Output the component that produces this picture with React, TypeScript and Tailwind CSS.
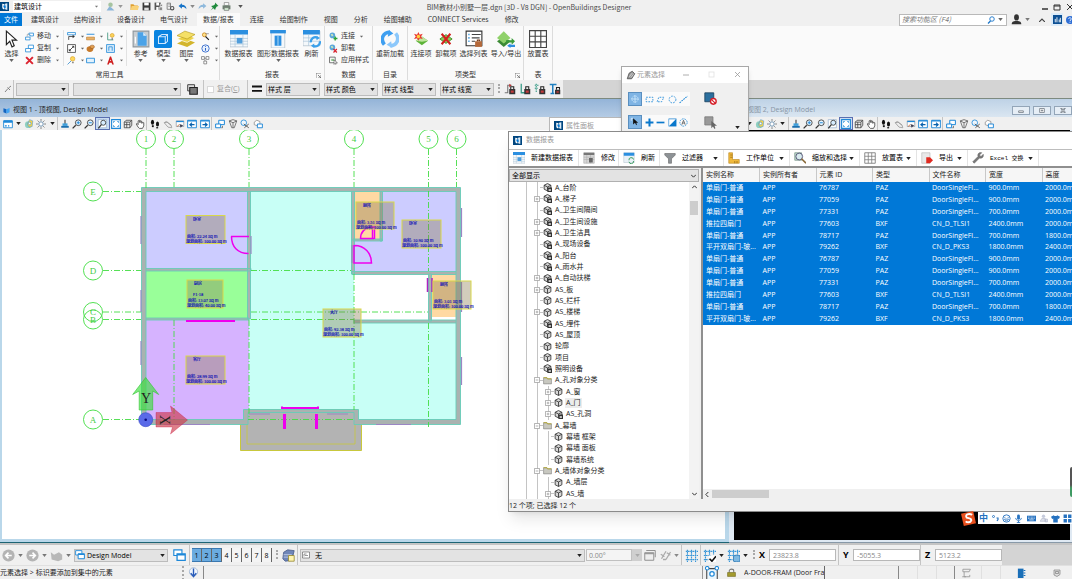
// @ts-nocheck
import { useState } from 'react';
import type { ReactNode } from 'react';

const BLUE = '#1e88d8';

// all glyphs share a 16 unit grid
const ICONS: Record<string, ReactNode> = {
  logo: <><rect width="16" height="16" fill="#00467f" /><path d="M4 3l4 1v9c-3 0-4-1-4-4z" fill="#fff" /><path d="M9 3l4-1v12l-4-1z" fill="#dcecf8" /><path d="M6 6h4v5c-2 0-4-1-4-3z" fill="#0078d7" /></>,
  person: <><circle cx="8" cy="5" r="4" fill="#a5c3a0" /><path d="M1 15l5-7 4 2 5 5z" fill="#8ab4d8" /></>,
  folder: <><path d="M1 4h5l2 2h6v8H1z" fill="#e0a030" /><path d="M3 7h13l-2 7H1z" fill="#f9d277" /></>,
  save: <><path d="M1 1h14v14H1z" fill="#3a3a3a" /><path d="M4 1h8v5H4z" fill="#fff" /><path d="M4 10h8v5H4z" fill="#ddd" /></>,
  saveset: <><path d="M1 1h11v13H1z" fill="#555" /><path d="M4 1h5v5H4zM4 9h4v5H4z" fill="#fff" /><path d="M11 4h4v4h-4zM9 9h6v6H9z" fill="#888" stroke="#fff" /></>,
  gear2: <><path d="M2 2h6v11H2z" fill="none" stroke="#777" strokeWidth="1.5" /><path d="M4 5h4M4 8h3" stroke="#777" /><circle cx="11" cy="11" r="3" fill="none" stroke="#555" strokeWidth="2" /></>,
  undo: <path d="M1 7l6-5v3c5 0 8 3 8 8-2-3-4-4-8-4v3z" fill="#1874c8" />,
  redo: <path d="M15 7L9 2v3C4 5 1 8 1 13c2-3 4-4 8-4v3z" fill="#8fb9dc" />,
  pin: <path d="M9 1l6 6-3 1-2 3-1 3-3-3-5 4 4-5-3-3 4-1 3-2z" fill="#1f8a3c" />,
  print: <><path d="M4 1h8v5H4z" fill="#fff" stroke="#666" /><path d="M1 6h14v7H1z" fill="#6d7f70" /><path d="M4 10h8v5H4z" fill="#cfe8cf" stroke="#666" /></>,
  cursor: <path d="M3 1v12l3-3 2 5 2-1-2-5h4z" fill="#fff" stroke="#222" strokeWidth="1" />,
  move: <><path d="M7 2h8v5H9V5H7z" fill="#fff" stroke={BLUE} strokeWidth="1.4" /><path d="M1 9h8v5H1z" fill="#fff" stroke={BLUE} strokeWidth="1.4" /><path d="M4 8V4h3" stroke="#888" fill="none" /></>,
  copy: <><path d="M6 2h9v6H6z" fill="#fff" stroke={BLUE} strokeWidth="1.4" /><path d="M1 8h9v6H1z" fill="#fff" stroke={BLUE} strokeWidth="1.4" /></>,
  del: <path d="M2 2l12 12M14 2L2 14" stroke="#dc2430" strokeWidth="3.5" />,
  lineset: <><path d="M1 1h14v4H1z" fill="#fff" stroke={BLUE} strokeWidth="1.4" /><path d="M3 14V8h8" fill="none" stroke="#333" strokeWidth="1.4" /><path d="M10 5l4 3-4 3z" fill="#333" /></>,
  measure: <><path d="M1 4h14" stroke={BLUE} strokeWidth="1.6" /><path d="M1 9h14v5H1z" fill="#e9b268" stroke="#b87a2c" /></>,
  axis: <><path d="M3 1v13h10" fill="none" stroke="#4a9b84" strokeWidth="1.6" /><circle cx="11" cy="6" r="3.5" fill="#fbd25a" stroke="#d69a1c" /><path d="M10 10h2v4h-2z" fill="#777" /></>,
  diag: <><path d="M1 1h14v14H1z" fill="#fff" stroke="#333" strokeWidth="1.3" /><path d="M4 12l8-8M9 4h3v3M4 9v3h3" stroke="#222" fill="none" strokeWidth="1.4" /></>,
  solid: <><ellipse cx="7" cy="9" rx="6" ry="5" fill="#c77a2a" /><ellipse cx="11" cy="5" rx="4" ry="3" fill="#e2a052" stroke="#97551a" /></>,
  profile: <><path d="M1 1h14v14H1z" fill="#d8ecfb" stroke={BLUE} strokeWidth="1.4" /><path d="M5 12V5h6v7" fill="none" stroke={BLUE} strokeWidth="1.4" /></>,
  bulb: <><path d="M1 15l7-7" stroke="#3e8fcc" strokeWidth="1.5" /><circle cx="10" cy="5" r="4" fill="#ffd85a" stroke="#d69a1c" /><path d="M9 10h3v3H9z" fill="#888" /></>,
  block: <path d="M1 4h14v8H1z" fill="#e3f2fc" stroke={BLUE} strokeWidth="1.5" />,
  letter: <path d="M7 1h2l5 14h-3l-1-3H6l-1 3H2zM7 9h2L8 6z" fill="#cf2020" fillRule="evenodd" />,
  refdoc: <><path d="M1 1h14v14H1z" fill="#c9ced2" stroke="#8f979d" /><path d="M5 2h5l3 3v9H5z" fill="#4ba3e8" /><path d="M10 2v3h3z" fill="#d8ecfb" /><path d="M3 6v6" stroke="#fff" /></>,
  model: <><rect width="16" height="16" rx="1.5" fill="#0a84e0" /><path d="M4 6h6v6H4zM4 6l3-2h5v6l-2 2M10 6l2-2" fill="none" stroke="#cfe8ff" strokeWidth="0.9" /></>,
  layers: <><path d="M0 12l9 3 7-4-8-3z" fill="#d3b52c" /><path d="M0 8l9 3 7-4-8-3z" fill="#ecd247" stroke="#fff" strokeWidth="0.6" /><path d="M0 5l9 3 7-4-9-3z" fill="#f5e067" stroke="#b99c1e" strokeWidth="0.6" /></>,
  find: <><circle cx="6" cy="5" r="3.5" fill="#ffe28a" stroke="#c9851c" strokeWidth="1.4" /><path d="M8 8l6 6" stroke="#222" strokeWidth="2" /><path d="M8 3h6" stroke="#666" /></>,
  info: <><circle cx="8" cy="8" r="6.5" fill="#e8f1fc" stroke="#2b63c9" strokeWidth="1.5" /><path d="M8 7v5M8 4v1.5" stroke="#2b63c9" strokeWidth="1.8" /></>,
  cells: <><path d="M1 1h5v5H1zM9 1h5v5H9zM5 9h5v5H5z" fill="#fff" stroke="#666" strokeWidth="1.2" /><path d="M6 4h3M7 6v3" stroke="#666" /></>,
  report: <><path d="M0 1h16v14H0z" fill="#f4f8fb" stroke="#a9b9c6" strokeWidth="0.6" /><path d="M0 0h16v4H0z" fill="#2b8fe0" /><path d="M0 7.500h16M0 10h16M0 12.500h16M4.500 4v11M11.500 4v11" stroke="#a9c4d8" strokeWidth="0.6" /><path d="M6 7h5v5H6z" fill="#4f9ddb" /></>,
  reportGrey: <><path d="M1 1h14v14H1z" fill="#d6d6d6" stroke="#999" strokeWidth="0.6" /><path d="M1 1h14v3H1z" fill="#777" /><path d="M1 7h14M1 10h14M5 4v11M10 4v11" stroke="#aaa" strokeWidth="0.7" /><path d="M8 8h5v6H8z" fill="#666" /></>,
  graphic: <><path d="M2 1h12v15H2z" fill="#f4f8fb" stroke="#a9b9c6" strokeWidth="0.6" /><path d="M1 0h14v3H1z" fill="#2b8fe0" /><path d="M5 5h6v9H5z" fill="#2b8fe0" /><path d="M8 5v9" stroke="#9fd0f5" /></>,
  refresh: <><path d="M0 1h15v13H0z" fill="#f4f8fb" stroke="#a9b9c6" strokeWidth="0.6" /><path d="M0 0h15v4H0z" fill="#2b8fe0" /><path d="M0 7h15M0 10h15M5 4v10" stroke="#a9c4d8" strokeWidth="0.6" /><path d="M7 11a4 4 0 0 1 6-4M15 10a4 4 0 0 1-6 4" fill="none" stroke="#3aa0ea" strokeWidth="2" /><path d="M12 5l3 2-3 2zM10 12l-3 2 3 2z" fill="#3aa0ea" /></>,
  refreshGreen: <><path d="M1 1h14v13H1z" fill="#e9f1f7" stroke="#a9b9c6" strokeWidth="0.6" /><path d="M1 1h14v4H1z" fill="#2b8fe0" /><path d="M8 11a3 3 0 0 1 6-1M14 12a3 3 0 0 1-6 1" fill="none" stroke="#3a9c62" strokeWidth="1.3" /></>,
  attach: <><circle cx="6" cy="6" r="5" fill="#5aa6dc" /><path d="M3 4l3-1 2 3-3 2zM7 8l3 1" fill="#c9e5b8" /><path d="M11 8v7M8 11.500h7" stroke="#2ba33b" strokeWidth="2.6" /></>,
  detach: <><circle cx="6" cy="6" r="5" fill="#5aa6dc" /><path d="M3 4l3-1 2 3-3 2z" fill="#c9e5b8" /><path d="M8 9l6 6M14 9l-6 6" stroke="#d8232e" strokeWidth="2.2" /></>,
  applystyle: <><path d="M1 2h10v10H1z" fill="#fff" stroke="#444" strokeWidth="1.3" /><path d="M4 5h5v4H4z" fill="#8cc28e" /><path d="M9 7v8l2-2 1 2 1-1-1-2h3z" fill="#fff" stroke="#222" strokeWidth="0.8" /></>,
  reload: <><path d="M3 13C-1 8 2 2 8 2" fill="none" stroke="#3f9ff0" strokeWidth="3.200" /><path d="M7 0l4 3-5 3z" fill="#3f9ff0" /><path d="M13 3c4 5 1 11-5 11" fill="none" stroke="#8cc8fb" strokeWidth="3.200" /><path d="M9 10l-4 3 5 3z" fill="#8cc8fb" /></>,
  linkitem: <><path d="M2 10l7-5 7 5-7 5z" fill="#5cb338" /><path d="M2 10l7-5 7 5-7 1z" fill="#bfe59d" /><path d="M5 0l1.500 3L10 2 8 5l2 3-3.500-1L5 10 3.500 7 0 8l2-3-2-3 3.500 1z" fill="#e9342d" /><circle cx="5" cy="5" r="2" fill="#ffd23f" /></>,
  unlinkitem: <><path d="M1 8l7-5 7 5-7 5z" fill="#8ccc5c" stroke="#3f8a28" /><path d="M3 2l10 12M13 2L3 14" stroke="#d3201f" strokeWidth="2.400" /></>,
  picklist: <><path d="M1 1h14v13H1z" fill="#fff" stroke="#333" strokeWidth="1" /><path d="M3 4h1M3 7h1M3 10h1" stroke={BLUE} strokeWidth="1.500" /><path d="M6 4h8M6 7h7M6 10h3" stroke="#444" strokeWidth="0.9" /><path d="M9 10h6v5H9z" fill="#b5693a" /><path d="M11 10V9h2v1" fill="none" stroke="#7a3f1c" /></>,
  impexp: <><path d="M0 10l6-4 6 4-6 5z" fill="#3c8a35" /><path d="M0 7l6-6 6 6-6 5z" fill="#8fd16a" /><path d="M8 9h5V7l3 3-3 3v-2H8z" fill="#3a9c3a" /><path d="M16 13h-4v-1l-3 2 3 2v-1h4z" fill="#2f8fe0" /></>,
  grid: <><path d="M0.500 0.500h15v15h-15z" fill="#fff" stroke="#444" strokeWidth="1" /><path d="M0 5.500h16M0 10.500h16M5.500 0v16M10.500 0v16" stroke="#444" strokeWidth="1" /></>,
  gridGrey: <><path d="M1 1h14v14H1z" fill="#fff" stroke="#777" strokeWidth="1.100" /><path d="M1 5.700h14M1 10.300h14M5.700 1v14M10.300 1v14" stroke="#777" /></>,
  picker: <path d="M2 14l6-7M7 5l5 5M9 6l5-4" stroke="#777" strokeWidth="1.800" fill="none" />,
  stack: <><path d="M1 1h10v9H1z" fill="#ddd" stroke="#333" strokeWidth="1.300" /><path d="M4 5h11v10H4z" fill="#777" stroke="#222" strokeWidth="1.600" /></>,
  weight: <path d="M0 4h16M0 11h16" stroke="#111" strokeWidth="3" />,
  lockA: <><path d="M1 13h4V3h5" fill="none" stroke="#777" strokeWidth="1.500" /><path d="M7 1l3 2-3 3z" fill="#c03030" /><path d="M9 8V5h4v3" fill="none" stroke="#222" strokeWidth="1.400" /><path d="M7 8h8v7H7z" fill="#333" /><path d="M9 10h4v3H9z" fill="#c23a3a" /></>,
  lockB: <><path d="M3 1v12h5" fill="none" stroke="#3a9c88" strokeWidth="1.700" /><path d="M9 8V5h4v3" fill="none" stroke="#222" strokeWidth="1.400" /><path d="M7 8h8v7H7z" fill="#333" /><path d="M9 10h4v3H9z" fill="#c23a3a" /></>,
  lockC: <><path d="M1 3h6M1 7h4M3 1v12" fill="none" stroke="#3a9c88" strokeWidth="1.500" strokeDasharray="2 1" /><path d="M9 8V5h4v3" fill="none" stroke="#222" strokeWidth="1.400" /><path d="M7 8h8v7H7z" fill="#333" /><path d="M9 10h4v3H9z" fill="#c23a3a" /></>,
  lockD: <><path d="M1 2h9M5 2v12M2 14h5" fill="none" stroke="#1e7fc0" strokeWidth="2" /><path d="M10 9V6h4v3" fill="none" stroke="#222" strokeWidth="1.400" /><path d="M8 9h7v6H8z" fill="#333" /><path d="M10 11h3v2h-3z" fill="#c23a3a" /></>,
  user: <><ellipse cx="8" cy="5" rx="3.500" ry="4.500" fill="#333" /><path d="M1 15c0-5 4-5 7-5s7 0 7 5z" fill="#333" /></>,
  chart: <><rect width="16" height="16" fill="#0b4f94" /><path d="M4 13V7M7 13V4M11 13V8M13 13V5" stroke="#fff" strokeWidth="1.600" /></>,
  help: <><circle cx="8" cy="8" r="8" fill="#2f6fd6" /><path d="M5.500 6c0-4 5-3 5 0 0 2-2.500 2-2.500 4M8 11.500v2" stroke="#fff" strokeWidth="1.700" fill="none" /></>,
  mag: <><circle cx="10" cy="6" r="4.500" fill="none" stroke="#1874c8" strokeWidth="1.800" /><path d="M7 10l-5 5" stroke="#1874c8" strokeWidth="2.400" /></>,
  viewattr: <><path d="M1 3h14v11H1z" fill="#fff" stroke={BLUE} strokeWidth="1.400" /><path d="M1 2h14v4H1z" fill={BLUE} /><path d="M3 11h3M8 11h2" stroke={BLUE} strokeWidth="2" /></>,
  display: <><circle cx="7" cy="9" r="5.500" fill="#8fd0c0" /><path d="M5 8L9 1l5 2-1 9-5 1z" fill="#f2d24a" stroke="#5f9fd0" /><circle cx="9" cy="7" r="2" fill="#fff" stroke="#3e8fcc" /></>,
  sun: <><circle cx="8" cy="8" r="3.500" fill="#fff" stroke="#6a8fae" strokeWidth="1.500" /><path d="M8 0v3M8 13v3M0 8h3M13 8h3M2.500 2.500l2 2M11.500 11.500l2 2M13.500 2.500l-2 2M4.500 11.500l-2 2" stroke="#777" strokeWidth="1.400" /></>,
  brush: <><path d="M7 1h2v7H7z" fill="#555" /><path d="M4 7h8v4H4z" fill="#3fa0dc" /><path d="M2 11h12v3H2z" fill="#1b6fae" /></>,
  zoomin: <><circle cx="10" cy="6" r="4.600" fill="#e5f4ff" stroke="#333" strokeWidth="1.300" /><path d="M10 3.500v5M7.500 6h5" stroke={BLUE} strokeWidth="1.500" /><path d="M6 10l-5 5" stroke="#333" strokeWidth="2" /></>,
  zoomout: <><circle cx="10" cy="6" r="4.600" fill="#e5f4ff" stroke="#333" strokeWidth="1.300" /><path d="M7.500 6h5" stroke={BLUE} strokeWidth="1.500" /><path d="M6 10l-5 5" stroke="#333" strokeWidth="2" /></>,
  zoomwin: <><path d="M2 1h13v13H2z" fill="#fff" stroke="#8aa8c8" /><circle cx="10" cy="6" r="4" fill="#d6ecff" stroke="#333" strokeWidth="1.300" /><path d="M7 9l-5 6" stroke="#333" strokeWidth="2" /></>,
  fit: <><path d="M1 1h14v14H1z" fill="#fff" stroke={BLUE} strokeWidth="1.800" /><path d="M4 6V4h2M10 4h2v2M4 10v2h2M12 10v2h-2" fill="none" stroke={BLUE} strokeWidth="1.300" /></>,
  cube: <><path d="M2 5l3-3h9v8l-3 4H2zM2 5h9v9M11 5l3-3M6 5v9M2 9h9" fill="none" stroke="#444" strokeWidth="1.300" /></>,
  hand: <path d="M5 13L2 8l1-1 2 2V3l2-1 1 4V3l2 0 1 4 1-2 2 1v5l-2 4H7z" fill="#fff" stroke="#444" strokeWidth="1.300" />,
  feet: <><ellipse cx="4" cy="5" rx="2.500" ry="4" fill="#111" /><path d="M3 10h3v3H3z" fill="#111" /><ellipse cx="12" cy="8" rx="2.500" ry="4" fill="#111" /><path d="M10 13h3v2h-3z" fill="#111" /></>,
  fly: <path d="M2 6l6 7 6 1-1-4-6-5zM2 6l3-2 8 6" fill="#eee" stroke="#999" strokeWidth="1.300" />,
  camera: <><path d="M2 3h12v9H2z" fill="#fff" stroke="#7b8794" /><path d="M2 3h12v2H2z" fill={BLUE} /><path d="M7 8l6 2-4 4z" fill="#445" /><path d="M4 12l2-3" stroke="#c63" strokeWidth="1.500" /></>,
  prev: <><path d="M1 2h14v12H1z" fill="#fff" stroke={BLUE} strokeWidth="1.500" /><path d="M1 2h14v2H1z" fill={BLUE} /><path d="M12 9H5M8 6L4.500 9 8 12" fill="none" stroke="#0a62ad" strokeWidth="1.700" /></>,
  next: <><path d="M1 2h14v12H1z" fill="#fff" stroke={BLUE} strokeWidth="1.500" /><path d="M1 2h14v2H1z" fill={BLUE} /><path d="M4 9h7M8 6l3.500 3L8 12" fill="none" stroke="#0a62ad" strokeWidth="1.700" /></>,
  copyview: <><path d="M6 2h9v7H6z" fill="#fff" stroke={BLUE} strokeWidth="1.600" /><path d="M1 8h8v6H1z" fill="#fff" stroke={BLUE} strokeWidth="1.600" /><path d="M12 11v3h-2" stroke="#444" fill="none" /></>,
  clipvol: <path d="M2 3l6-2 6 2-4 11H6zM2 3l6 3 6-3M8 6v8" fill="#eee" stroke="#555" strokeWidth="1.200" />,
  clipmask: <><circle cx="6" cy="6" r="4.500" fill="#eef6fd" stroke={BLUE} strokeWidth="1.300" /><path d="M6 8l8 6M14 8l-7 6" stroke="#555" strokeWidth="1.500" /></>,
  viewcopy: <><path d="M2 5l4-3 5 2v5l-4 2-5-2z" fill="#fff" stroke="#888" strokeWidth="1.200" /><path d="M7 8h8v6H7z" fill="#fff" stroke={BLUE} strokeWidth="1.500" /></>,
  pencil: <><path d="M2 14L5 5l5-3 4 4-5 8z" fill="#999" stroke="#444" strokeWidth="1.200" /><path d="M5 11l5-6M8 12l4-5" stroke="#eee" /></>,
  target: <><circle cx="8" cy="8" r="5" fill="none" stroke="#d8efff" strokeWidth="1.200" strokeDasharray="2 1" /><path d="M8 2v12M2 8h12" stroke="#d8efff" strokeWidth="1.200" /></>,
  dashbox: <path d="M2 4h12v8H2z" fill="none" stroke={BLUE} strokeWidth="1.500" strokeDasharray="3 2" />,
  dashpoly: <path d="M2 12l3-8h9l-4 8z" fill="none" stroke={BLUE} strokeWidth="1.500" strokeDasharray="3 2" />,
  dashcircle: <circle cx="8" cy="8" r="6" fill="none" stroke={BLUE} strokeWidth="1.500" strokeDasharray="3 2" />,
  dashline: <path d="M1 14L15 2" stroke={BLUE} strokeWidth="1.800" strokeDasharray="3 1.500" />,
  arrowsel: <><path d="M5 2v10l3-3 2 4 1-1-1-3h3z" fill="#111" /><path d="M2 2h3M2 2v4" stroke="#fff" /></>,
  plus: <path d="M8 1v14M1 8h14" stroke="#0a78cc" strokeWidth="3.600" />,
  minus: <path d="M1 8h14" stroke="#0a78cc" strokeWidth="3" />,
  invert: <><path d="M1 1h14v14H1z" fill="#0a78cc" /><path d="M2 2h12L2 14z" fill="#fff" /></>,
  selall: <><circle cx="8" cy="8" r="6.500" fill="none" stroke={BLUE} strokeWidth="1.400" strokeDasharray="3 1.500" /><path d="M5 12l3-8 3 8M6 9h4" stroke="#555" strokeWidth="1.400" fill="none" /></>,
  noselect: <><path d="M1 1h11v11H1z" fill="#2b6f9e" stroke="#173f5c" /><circle cx="11.500" cy="11.500" r="3.500" fill="#fff" stroke="#d6202a" strokeWidth="1.700" /><path d="M9 9l5 5" stroke="#d6202a" strokeWidth="1.500" /></>,
  greysel: <><path d="M1 1h10v10H1z" fill="#999" stroke="#777" /><path d="M9 6v9l2-2 2 3 1-1-1-3h3z" fill="#666" /></>,
  funnel: <path d="M1 2h14v2l-5 5v6H6V9L1 4z" fill="#8d9296" stroke="#666" strokeWidth="0.800" />,
  ruler: <><path d="M1 1h5v9h9v5H1z" fill="#f0b93c" stroke="#b8841c" strokeWidth="0.800" /><path d="M3 4h3M3 7h3M9 12v3M12 12v3" stroke="#8a5f10" strokeWidth="0.900" /></>,
  zoomsel: <><path d="M1 1h9v10H1z" fill="#bcd8cc" stroke="#7a948a" /><circle cx="7" cy="6" r="4.500" fill="#dff0f8" fillOpacity="0.800" stroke="#557" strokeWidth="1.200" /><path d="M10 9l6 6" stroke="#8a6a3a" strokeWidth="2.200" /></>,
  export: <><path d="M1 1h11v14H1z" fill="#e9e9e9" stroke="#aaa" strokeWidth="0.700" /><path d="M7 7h5l4 4-4 4H7z" fill="#e02a20" /></>,
  wrench: <path d="M15 3l-3 3-2-2 3-3c-4-1-6 2-5 5L1 13l2 2 7-7c3 1 6-1 5-5z" fill="#7a7a7a" stroke="#555" strokeWidth="0.600" />,
  part: <><path d="M8 1l6 3v8l-6 3-6-3V4z" fill="#d8d8d8" stroke="#333" strokeWidth="1.500" /><path d="M2 4l6 3 6-3M8 7v8" stroke="#333" strokeWidth="1.500" fill="none" /></>,
  partLock: <><path d="M8 1l6 3v6l-6 4-6-3V4z" fill="#d8d8d8" stroke="#333" strokeWidth="1.500" /><path d="M2 4l6 3 6-3M8 7v7" stroke="#333" strokeWidth="1.500" fill="none" /><path d="M8 8h8v8H8z" fill="#333" /><path d="M10 11h4v3h-4z" fill="#ddd" /></>,
  treeFolder: <><path d="M1 3h6l1 2h7v9H1z" fill="#c8c8c0" stroke="#777" strokeWidth="1" /><path d="M1 3h6l1 2h7" stroke="#b5a92c" strokeWidth="1.600" fill="none" /></>,
  back: <><circle cx="8" cy="8" r="7.500" fill="#b4b4b4" /><path d="M12 8H5M8 4.500L4.500 8 8 11.500" stroke="#fff" strokeWidth="2" fill="none" /></>,
  fwd: <><circle cx="8" cy="8" r="7.500" fill="#b4b4b4" /><path d="M4 8h7M8 4.500L11.500 8 8 11.500" stroke="#fff" strokeWidth="2" fill="none" /></>,
  teapot: <path d="M1 4l4 3 6-3 4 3v6l-5 2-8-2z" fill="#b8b8b8" />,
  windows: <><path d="M1 1h10v7H1z" fill="#fff" stroke={BLUE} strokeWidth="1.400" /><path d="M5 6h10v8H5z" fill="#fff" stroke={BLUE} strokeWidth="1.600" /><path d="M5 6h10v2H5z" fill={BLUE} /></>,
  levels: <><path d="M2 4l5-3 8 1-3 12-8 1-3-3z" fill="#6f86b8" stroke="#4a5c8a" /><path d="M2 7l10 0M2 10h9" stroke="#c9d5ee" /><path d="M8 8h7v7H8z" fill="#fff4b0" stroke="#998a30" /></>,
  acs: <><path d="M1 2h14v12H1z" fill="#fff" stroke="#555" strokeWidth="1.200" /><path d="M4 11V6h5M6 9h6" stroke="#555" strokeWidth="1.200" fill="none" /></>,
  calendar: <><path d="M1 5h12v10H1z" fill="#eee" stroke="#888" strokeWidth="1.200" /><path d="M3 2h12v9" fill="none" stroke="#888" strokeWidth="1.200" /><path d="M1 5h12v2H1z" fill="#999" /></>,
  rotateg: <path d="M2 13L8 3M8 14l6-10M1 7l5 3M9 5l5 3M4 14h4" stroke="#aaa" strokeWidth="1.700" fill="none" />,
  snapgrid: <path d="M1 3h15M1 8h15M1 13h15M3 1v15M8 1v15M13 1v15" stroke="#3a97d8" strokeWidth="1.400" fill="none" strokeDasharray="2 0.700" />,
  snapcheck: <><path d="M1 3h15M1 8h9M1 13h6M3 1v15M8 1v9M13 1v6" stroke="#3a97d8" strokeWidth="1.400" fill="none" strokeDasharray="2 0.700" /><path d="M7 8h9v8H7z" fill="#fff" /><path d="M8 12l3 3 5-6" stroke="#111" strokeWidth="2" fill="none" /></>,
  snapdb: <><path d="M1 3h15M1 8h15M1 13h6M3 1v15M8 1v9M13 1v6" stroke="#3a97d8" strokeWidth="1.400" fill="none" strokeDasharray="2 0.700" /><path d="M8 9c2-2 6-2 8 0v6c-2 1-6 1-8 0z" fill="#7fb9e2" stroke="#2a78b4" /></>,
  infodown: <><circle cx="8" cy="7" r="6" fill="#f0f6fd" stroke="#8fa9cc" /><path d="M8 2v10M4 9l4 5 4-5" stroke="#2659b8" strokeWidth="2" fill="none" /></>,
  keysnap: <><path d="M2 3h12v13H2z" fill="#eaf5fc" stroke="#444" strokeWidth="1.200" /><circle cx="2.500" cy="2.500" r="2" fill="#fff" stroke={BLUE} strokeWidth="1.200" /><circle cx="13.500" cy="2.500" r="2" fill="#fff" stroke={BLUE} strokeWidth="1.200" /><circle cx="8" cy="9" r="2.500" fill="#fff" stroke={BLUE} strokeWidth="1.400" /></>,
  padlock: <><path d="M4 8V5c0-4 8-4 8 0v3" fill="none" stroke="#777" strokeWidth="1.800" /><path d="M1 8h14v7H1z" fill="#a39a2e" stroke="#6b6418" /></>,
  scroll: <path d="M3 2h12l-2 4H3zM5 6v8h9v-3M2 14h6" fill="none" stroke="#999" strokeWidth="1.400" />,
  chip: <><path d="M3 1h9v15H3z" fill="#1a6fb8" /><path d="M12 4h3M12 8h3M12 12h3" stroke="#1a6fb8" strokeWidth="1.600" /></>,
  badge: <path d="M2 2h12v9l-6 4-6-3zM5 5h6v4H5z" fill="#ddd" stroke="#777" strokeWidth="1.300" />,
  smile: <><circle cx="8" cy="8" r="6.500" fill="none" stroke="#2672c0" strokeWidth="1.600" /><path d="M5 5v2M11 5v2M4.500 9c1 4 6 4 7 0z" stroke="#2672c0" strokeWidth="1.400" fill="none" /></>,
  mic: <><rect x="5.500" y="1" width="5" height="9" rx="2.500" fill="#2672c0" /><path d="M3 7c0 6 10 6 10 0M8 12v3M5 15h6" stroke="#2672c0" strokeWidth="1.500" fill="none" /></>,
  keyboard: <><path d="M0 3h16v10H0z" fill="#2672c0" /><path d="M2 5.500h12M2 8h12" stroke="#fff" strokeWidth="1.200" strokeDasharray="1.500 1" /><path d="M4 10.500h8" stroke="#fff" strokeWidth="1.200" /></>,
  figure: <><circle cx="8" cy="4" r="3" fill="#c5cbdc" /><path d="M5 8h6v5H2zM11 9h4v5h-4z" fill="#dde0ea" stroke="#a9aec5" /></>,
  shirt: <path d="M5 2l-5 3 2 4 2-1v7h8V8l2 1 2-4-5-3c-1 2-5 2-6 0z" fill="#2672c0" />,
  apps: <path d="M1 1h6v6H1zM9 1h6v6H9zM1 9h6v6H1zM9 9h6v6H9z" fill="#2672c0" />,
  sogou: <><path d="M0 3l13-3 3 13-13 3z" fill="#e8501e" /><path d="M12 4C8 2 4 4 6 7c2 1 5 0 5 3-1 3-5 2-6 1" stroke="#fff" strokeWidth="2" fill="none" /></>,
};

function Ico({ n, c = 'size-[10px]' }: { n: string; c?: string }) {
  return <svg viewBox="0 0 16 16" className={`${c} shrink-0`} aria-hidden="true">{ICONS[n]}</svg>;
}

function Caret({ c = 'text-[#222]' }: { c?: string }) {
  return <svg viewBox="0 0 6 4" className={`h-[3px] w-[5px] shrink-0 ${c}`} aria-hidden="true"><path d="M0 0h6L3 4z" fill="currentColor" /></svg>;
}

const Sep = ({ c = 'bg-[#c4c4c4]' }) => <span className={`w-px self-stretch shrink-0 ${c}`} />;
const Grip = () => <span className="h-[14px] w-0 shrink-0 border-l-2 border-dotted border-[#a8a8a8]" />;

function Combo({ label, value, w }) {
  return (
    <span className={`relative flex h-[13px] items-center ${w}`}>
      <select aria-label={label} className="size-full appearance-none border border-[#bcbcbc] bg-[#e3e3e3] px-px text-[7px] leading-[11px] outline-none">
        <option>{value}</option>
      </select>
      <span className="pointer-events-none absolute right-[3px]"><Caret /></span>
    </span>
  );
}

function QuickBar() {
  return (
    <header className="flex h-[13px] items-center bg-[#f0f0f0]">
      <Ico n="logo" c="size-[9px]" />
      <span className="relative ml-1 flex h-[11px] w-[88px] items-center">
        <select aria-label="工作流" className="size-full appearance-none bg-white px-px text-[7px] leading-[11px] outline-none"><option>建筑设计</option></select>
        <span className="pointer-events-none absolute right-[2px]"><Caret c="text-[#777] scale-75" /></span>
      </span>
      <div className="ml-[5px] flex items-center gap-[3px]">
        <Ico n="person" c="size-[9px]" /><Caret c="text-[#999]" />
        <span className="w-px" />
        {['folder', 'save', 'saveset', 'gear2', 'undo'].map(n => <button key={n} aria-label={n}><Ico n={n} c="size-[9px]" /></button>)}
        <Caret c="text-[#888]" />
        {['redo', 'pin', 'print'].map(n => <button key={n} aria-label={n}><Ico n={n} c="size-[9px]" /></button>)}
        <span className="ml-1"><Caret c="text-[#555]" /></span>
      </div>
      <h1 className="pointer-events-none absolute left-0 right-[14px] text-center font-['Noto_Sans_CJK_SC',sans-serif] text-[7px] leading-[12px] text-[#4a4a4a]">
        BIM教材小别墅一层.dgn [3D - V8 DGN] - OpenBuildings Designer
      </h1>
      <svg viewBox="0 0 30 8" className="ml-auto h-[8px] w-[30px]" fill="none" stroke="#333">
        <path d="M0 6h6" strokeWidth="1.500" /><path d="M12 2h6v5h-6zM12 3h6" /><path d="M25 1l6 6M31 1l-6 6" />
      </svg>
    </header>
  );
}

const TABS_LEFT = ['建筑设计', '结构设计', '设备设计', '电气设计'];
const TABS_RIGHT = ['连接', '绘图制作', '视图', '分析', '绘图辅助', 'CONNECT Services', '修改'];

function TabBar() {
  return (
    <nav className="flex h-[13px] items-center bg-[#f0f0f0] font-['Noto_Sans_CJK_SC',sans-serif] leading-[13px] text-[#333]">
      <button className="h-full w-[22px] bg-[#0078d7] text-white">文件</button>
      <div className="ml-[9px] flex gap-[15px]">
        {TABS_LEFT.map(t => <button key={t}>{t}</button>)}
      </div>
      <button className="ml-[9px] h-full bg-[#fafafa] px-[6px]">数据/报表</button>
      <div className="ml-[10px] flex gap-4">
        {TABS_RIGHT.map(t => <button key={t} className="whitespace-nowrap">{t}</button>)}
      </div>
      <div className="ml-auto flex h-full items-center">
        <span className="relative flex h-[12px] w-[108px] items-center border border-[#b9b9b9] bg-white">
          <input aria-label="搜索" placeholder="搜索功能区 (F4)" className="min-w-0 flex-1 px-[2px] italic outline-none placeholder:text-[#777]" />
          <Ico n="mag" c="size-[8px]" /><span className="mx-[3px]"><Caret c="text-[#666]" /></span>
        </span>
        <span className="ml-[4px]"><Ico n="user" c="size-[11px]" /></span>
        <span className="ml-[3px]"><Caret c="text-[#777]" /></span>
        <svg viewBox="0 0 6 4" className="ml-[9px] h-[4px] w-[6px]" fill="none" stroke="#444" strokeWidth="1.200"><path d="M0 4l3-3 3 3" /></svg>
        <span className="ml-[6px] flex h-full w-[12px] items-center justify-center bg-[#dcebf8]"><Ico n="chart" c="size-[9px]" /></span>
        <span className="ml-[3px] w-[6px] overflow-hidden"><Ico n="help" c="size-[8px]" /></span>
      </div>
    </nav>
  );
}

function Big({ icon, text, w, caret = false, c = 'size-[18px]' }) {
  return (
    <button className={`flex flex-col items-center whitespace-nowrap ${w}`}>
      <Ico n={icon} c={c} />
      <span className="mt-px leading-[9px]">{text}</span>
      {caret && <span className="mt-px"><Caret c="text-[#666]" /></span>}
    </button>
  );
}

function Small({ icon, text, caret = true }) {
  return (
    <button className="flex h-[12px] items-center whitespace-nowrap leading-[12px]" aria-label={text || icon}>
      <Ico n={icon} c="size-[9px]" />
      {text && <span className="ml-[3px]">{text}</span>}
      {caret && <span className="ml-[4px] scale-75"><Caret c="text-[#666]" /></span>}
    </button>
  );
}

function Group({ title, w, children, launcher = false }) {
  return (
    <section className={`relative flex shrink-0 flex-col border-r border-[#dcdcdc] ${w}`}>
      <div className="flex flex-1 items-start pt-[4px]">{children}</div>
      <h2 className="text-center leading-[10px]">{title}</h2>
      {launcher && (
        <svg viewBox="0 0 5 5" className="absolute bottom-[2px] right-[3px] size-[5px]" fill="none" stroke="#666"><path d="M0 5V0h5M2 2l3 3M5 2v3H2" strokeWidth="0.800" /></svg>
      )}
    </section>
  );
}

function Ribbon() {
  return (
    <div className="flex h-[54px] bg-[#fafafa] text-[#333]">
      <Group title="常用工具" w="w-[220px]">
        <Big icon="cursor" text="选择" w="w-[24px]" caret />
        <div className="ml-[2px] flex flex-col">
          <Small icon="move" text="移动" /><Small icon="copy" text="复制" /><Small icon="del" text="删除" />
        </div>
        <span className="mx-[3px] h-[36px] w-px bg-[#e2e2e2]" />
        <div className="grid grid-cols-3 gap-x-[2px]">
          {['lineset', 'measure', 'axis', 'diag', 'solid', 'profile', 'bulb', 'block', 'letter'].map(n => <Small key={n} icon={n} text="" />)}
        </div>
        <span className="mx-[3px] h-[36px] w-px bg-[#e2e2e2]" />
        <Big icon="refdoc" text="参考" w="w-[23px]" caret />
        <Big icon="model" text="模型" w="w-[24px]" caret />
        <Big icon="layers" text="图层" w="w-[24px]" caret />
        <div className="ml-[3px] flex flex-col">
          {['find', 'info', 'cells'].map(n => <Small key={n} icon={n} text="" />)}
        </div>
      </Group>
      <Group title="报表" w="w-[105px]" launcher>
        <Big icon="report" text="数据报表" w="w-[37px]" caret />
        <Big icon="graphic" text="图形数据报表" w="w-[42px]" caret />
        <Big icon="refresh" text="刷新" w="w-[25px]" />
      </Group>
      <Group title="数据" w="w-[48px]">
        <div className="ml-[4px] flex flex-col">
          <Small icon="attach" text="连接" /><Small icon="detach" text="卸载" caret={false} /><Small icon="applystyle" text="应用样式" caret={false} />
        </div>
      </Group>
      <Group title="目录" w="w-[35px]"><Big icon="reload" text="重新加载" w="w-[34px]" /></Group>
      <Group title="项类型" w="w-[116px]" launcher>
        <Big icon="linkitem" text="连接项" w="w-[26px]" c="size-[14px] my-[2px]" />
        <Big icon="unlinkitem" text="卸载项" w="w-[24px]" c="size-[14px] my-[2px]" />
        <Big icon="picklist" text="选择列表" w="w-[31px]" />
        <Big icon="impexp" text="导入/导出" w="w-[34px]" />
      </Group>
      <Group title="表" w="w-[29px]"><Big icon="grid" text="放置表" w="w-[28px]" /></Group>
    </div>
  );
}

function AttributeBar() {
  return (
    <div className="flex h-[19px] border-b border-[#7d8a80] bg-[#d4d4d4]">
      <div className="flex items-center bg-[#f0f0f0] px-[2px]">
        <span className="w-[11px] pl-[2px]"><Ico n="picker" c="size-[8px]" /></span>
        <Sep /><span className="w-[2px]" />
        <Combo label="图层" value="" w="w-[53px]" />
        <span className="w-[4px]" />
        <Combo label="模板" value="" w="w-[108px]" />
        <span className="ml-[6px] mr-[5px]"><Ico n="stack" c="size-[11px]" /></span>
        <Sep />
        <label className="flex items-center text-[#999]"><input type="checkbox" className="mx-[3px] size-[7px] appearance-none border border-[#d8d8d8] bg-white" /><span className="w-[30px]">复合(<u>C</u>)</span></label>
        <Sep />
        <span className="mx-[4px]"><Ico n="weight" c="size-[10px]" /></span>
        <div className="flex gap-[4px]">
          {['层', '颜色', '线型', '线宽'].map(s => <Combo key={s} label={s} value={`样式 ${s}`} w="w-[54px]" />)}
        </div>
        <span className="mx-[4px]"><Grip /></span>
        <div className="flex gap-[3px]">
          {['lockA', 'lockB', 'lockC', 'lockD'].map(n => <button key={n} aria-label={n}><Ico n={n} c="size-[12px]" /></button>)}
        </div>
      </div>
    </div>
  );
}

function ViewTools({ active }) {
  const cell = (n: string) => (
    <button key={n} aria-label={n} className={`flex h-full flex-1 items-center justify-center ${n === active ? 'border border-[#5a6fb0] bg-[#c9dcf2]' : ''}`}>
      <Ico n={n} c="size-[10px]" />
    </button>
  );
  return (
    <div className="flex h-[13px] items-center bg-[#f0f0f0]">
      <span className="flex w-[12px]">{cell('viewattr')}</span>
      <span className="flex w-[9px] justify-center"><Caret /></span>
      <span className="flex w-[24px]">{cell('display')}{cell('sun')}</span>
      <span className="flex w-[10px] justify-center"><Caret /></span>
      <Sep />
      <span className="ml-px flex h-full w-[87px] items-center">{['brush', 'zoomin', 'zoomout', 'zoomwin', 'fit', 'cube', 'hand'].map(cell)}</span>
      <Sep />
      <span className="ml-[2px] flex w-[62px]">{['feet', 'fly', 'camera', 'prev', 'next'].map(cell)}</span>
      <Sep />
      <span className="ml-[2px] flex w-[50px]">{['copyview', 'clipvol', 'clipmask', 'viewcopy'].map(cell)}</span>
    </div>
  );
}

const AXES_X = [[146, '1'], [174, '2'], [249, '3'], [354, '4'], [428.5, '5'], [456.5, '6']];
const AXES_Y = [[191.5, 'E'], [270.5, 'D'], [312, 'C'], [319.5, 'B'], [419.5, 'A']];
const ROOMS = [
  { x: 186, y: 215.5, w: 39, h: 28, name: '卧室', area: '22.24', total: '100.00' },
  { x: 187, y: 280, w: 36, h: 28, name: '厨房', area: '13.07', total: '40.00', sub: 'F1-1a' },
  { x: 356, y: 202, w: 38, h: 27, name: '厕所', area: '3.51', total: '100.00' },
  { x: 402, y: 220, w: 39, h: 28, name: '卧室', area: '10.90', total: '100.00' },
  { x: 323, y: 309, w: 38, h: 28, name: '大厅', area: '92.38', total: '100.00' },
  { x: 433, y: 281, w: 38, h: 28, name: '厕所', area: '3.01', total: '100.00' },
  { x: 186, y: 356, w: 39, h: 28, name: '客厅', area: '28.99', total: '100.00' },
];

function FloorPlan() {
  const wall = { fill: '#aab2b0', stroke: '#66ccb8', strokeWidth: 0.9 };
  return (
    <svg viewBox="2 130 500 409" className="h-[409px] w-[500px] shrink-0">
      <path d="M146 191h104v79H146z" fill="#ccccff" />
      <path d="M146 271h102v48H146z" fill="#99ff99" />
      <path d="M146 320h103v100H146z" fill="#d6b3ff" />
      <path d="M249 191h105v131h103v98H249z" fill="#c8fff6" />
      <path d="M354 191h103v81H354z" fill="#ccccff" />
      <path d="M354 191h27v48h-27zM432 274h25v43h-25z" fill="#ffd9a3" />
      <path d="M240.500 424h5v-14h112v14h4v26.500h-121z" fill="#b3b3b3" stroke="#c8c83c" />
      <path d="M247 413v31h108v-31" fill="none" stroke="#c8c83c" strokeWidth="0.800" />

      <g {...wall}>
        <path d="M145 268.500h106v2.500H145zM145 318h104v2H145zM247.500 191h3v128h-3z" />
        <path d="M351.500 191h3v83h-3zM380 191h2.500v50H380zM353 239h29v2h-29zM352 271.500h106v3H352z" />
        <path d="M428.500 274h3v47h-3zM354 320h104v3H354z" />
        <path fillRule="evenodd" d="M141.500 187.500h319V424.500H354v-12H248v12H141.500zM146 191.500V419.500H243.500V409.500H358.500V419.500H456V191.500z" />
      </g>

      <g stroke="#43dd43" strokeWidth="0.900" fill="none" strokeDasharray="6 2 1 2">
        <path d="M146 149v39M174 149v38M249 149v38M354 149v38M428.500 149v38M456.500 149v38" />
        <path d="M174 320v100M249 320v100M354 274v136M428.500 191v80M428.500 323v104" />
        <path d="M103 191.500h38M103 270.500h38M251 270.500h100M103 312h38M251 312h177M103 319.500h38M251 319.500h103M103 419.500h38M248 419.500h106" />
      </g>
      <g stroke="#3fdc3f" strokeWidth="0.900" fill="none">
        {AXES_X.map(([x]) => <circle key={x} cx={x} cy={139} r={9.5} />)}
        {AXES_Y.map(([y]) => <circle key={y} cx={93} cy={y} r={9.5} />)}
      </g>
      <g className="font-['Liberation_Serif',serif]" fontSize="9" fill="#45cc45" textAnchor="middle">
        {AXES_X.map(([x, t]) => <text key={t} x={x} y={142}>{t}</text>)}
        {AXES_Y.map(([y, t]) => <text key={t} x={93} y={Number(y) + 3}>{t}</text>)}
      </g>

      <g stroke="#9b86c4" strokeWidth="1.200">
        <path d="M141 216v28M141 290v22M141 341v24M461.500 208v29M461.500 282v30M461.500 357v28M164 424.500h46M376 424.500h35M249 414h21M327 414h21M352 245v18M251 236v18" />
      </g>
      <g stroke="#ee00ee" strokeWidth="1.500" fill="none">
        <path d="M231 236.500h18M231.500 236.500c0 10 6 17 17 17" />
        <path d="M354 245v18h17.500c0-10-7-17.500-17-17.500" />
        <path d="M360.500 239c0-7 4-11 11-12h3v12M360 238.500h14M372.500 227v12" />
        <path d="M186 321h49M281 408h38M282 406.500v2M318 406.500v2" strokeWidth="2" />
        <path d="M284.500 414v15M316.500 414v15" strokeWidth="3" />
      </g>
      <path d="M427.500 278v14M432 278v14" stroke="#b020c0" strokeWidth="1.500" />

      {ROOMS.map(r => (
        <g key={`${r.x}-${r.y}`}>
          <rect x={r.x} y={r.y} width={r.w} height={r.h} fill="#8a7a50" fillOpacity="0.38" stroke="#d8d84a" strokeWidth="1" />
          <g className="font-['Noto_Sans_CJK_SC',sans-serif]" fontSize="4" fill="#1414b4" stroke="#1414b4" strokeWidth="0.15">
            <text x={r.x + 7} y={r.y + 5}>{r.name}</text>
            {r.sub && <text x={r.x + 6} y={r.y + 16}>{r.sub}</text>}
            <text x={r.x + 1} y={r.y + 22}>面积: {r.area} Sq m</text>
            <text x={r.x} y={r.y + 27}>规划面积: {r.total} Sq m</text>
          </g>
        </g>
      ))}

      <path d="M145.700 377.500l13 17-6-3.500v19h-13.500v-19l-6.500 3.500z" fill="#3ae03a" fillOpacity="0.65" stroke="#2fc52f" strokeWidth="0.600" />
      <path d="M156 412.500h16l-1.500-6.500 17 14-17 14 2-7H156z" fill="#cc3b4b" fillOpacity="0.65" stroke="#c03" strokeOpacity="0.500" strokeWidth="0.600" />
      <circle cx="145.700" cy="419.700" r="7" fill="#5a6ae8" stroke="#3646c8" strokeWidth="0.600" />
      <circle cx="145.700" cy="419.700" r="1.300" fill="#0a0a80" />
      <g className="font-['Liberation_Serif',serif]" fill="#222" textAnchor="middle">
        <text x="146" y="403" fontSize="14">Y</text>
        <text transform="translate(163.500 420) rotate(90)" y="4" fontSize="14">X</text>
      </g>
    </svg>
  );
}

function Workspace() {
  return (
    <main className="flex min-h-0 flex-1 border-b-2 border-[#c4c4c4]">
      <section className="flex w-[68%] flex-col border-b border-[#1c6474] bg-[#b9d7ea]">
        <div className="flex h-[18px] items-center bg-linear-to-b from-[#94b4d8] to-[#b4cbe4] pl-[3px] pt-[4px] text-[#222]">
          <span className="mr-[3px]"><svg viewBox="0 0 16 16" className="size-[7px]"><path d="M1 3l7 2v10l-7-3z" fill="#1565c0" /><path d="M8 5l7-3v10l-7 3z" fill="#42a5f5" /></svg></span>
          视图 1 - 顶视图, Design Model
        </div>
        <div className="bg-[#f0f0f0] pl-[2px]"><ViewTools active="zoomwin" /></div>
        <div className="mb-[3px] ml-[2px] mr-[4px] min-h-0 flex-1 overflow-hidden bg-white"><FloorPlan /></div>
      </section>
      <section className="flex min-w-0 flex-1 flex-col border-b border-[#8899a8] bg-[#dfe9f3]">
        <div className="flex h-[18px] items-center bg-linear-to-b from-[#bed2e6] to-[#dae6f1] pl-[18px] pt-[4px] text-[#8795a5]">
          视图 2, Design Model
          <div className="ml-auto flex gap-[3px]">
            {['M6 5h6v2H6z', 'M6 2h6v5H6zM8 4h2v1H8z', 'M6 2l2 2-2 3h2l1-2 1 2h2l-2-3 2-2h-2L9 4 8 2z'].map(d => (
              <button key={d} aria-label="窗口" className="h-[9px] w-[18px] border border-[#93a5b8] bg-[#e6eef6]">
                <svg viewBox="0 0 18 9" className="h-[7px] w-[16px]"><path d={d} fill="#fff" stroke="#5b6670" strokeWidth="0.900" /></svg>
              </button>
            ))}
          </div>
        </div>
        <div className="bg-[#f0f0f0] pl-[4px]"><ViewTools active="fit" /></div>
        <div className="mb-[2px] ml-[5px] mr-[2px] flex-1 bg-black" />
      </section>
    </main>
  );
}

function SelectionWindow() {
  return (
    <aside className="absolute left-[621px] top-[66px] h-[70px] w-[128px] border border-[#a8a8a8] bg-[#f0f0f0] shadow-md">
      <div className="flex h-[16px] items-center bg-white pl-[4px] text-[#999]">
        <Ico n="pencil" c="size-[10px]" /><span className="ml-px">元素选择</span>
        <svg viewBox="0 0 60 8" className="ml-auto mr-[7px] h-[8px] w-[60px]" fill="none" stroke="#999" strokeWidth="0.800">
          <path d="M2 4h6M54 1l5 5M59 1l-5 5" /><rect x="28" y="1" width="5" height="5" stroke="#e0e0e0" />
        </svg>
      </div>
      <div className="flex px-[6px] pt-[9px]">
        <div className="flex flex-col gap-[9px]">
          {[['target', 'dashbox', 'dashpoly', 'dashcircle', 'dashline'], ['arrowsel', 'plus', 'minus', 'invert', 'selall']].map(row => (
            <div key={row[0]} className="flex h-[14px] w-[62px] items-center justify-between bg-[#fafafa] pr-[2px]">
              {row.map((n, i) => (
                <button key={n} aria-label={n} className={i === 0 ? 'border border-[#5a8fc0] bg-[#7fb4e4] p-px' : ''}><Ico n={n} c={i === 0 ? 'size-[10px]' : 'size-[9px]'} /></button>
              ))}
            </div>
          ))}
        </div>
        <div className="ml-[14px] flex flex-col gap-[11px]">
          <Ico n="noselect" c="size-[13px]" /><Ico n="greysel" c="size-[13px]" />
        </div>
        <span className="ml-auto mr-[2px] self-end"><Caret /></span>
      </div>
    </aside>
  );
}

const TREE = [
  [1, '', 'partLock', 'A_台阶'], [1, '+', 'partLock', 'A_梯子'], [1, '', 'partLock', 'A_卫生间隔间'], [1, '+', 'partLock', 'A_卫生间设施'],
  [1, '+', 'partLock', 'A_卫生洁具'], [1, '', 'partLock', 'A_现场设备'], [1, '', 'partLock', 'A_阳台'], [1, '', 'partLock', 'A_雨水井'],
  [1, '+', 'partLock', 'A_自动扶梯'], [1, '+', 'part', 'AS_板'], [1, '', 'part', 'AS_栏杆'], [1, '+', 'part', 'AS_楼梯'],
  [1, '', 'partLock', 'AS_埋件'], [1, '', 'part', 'AS_屋顶'], [1, '', 'part', '轮廓'], [1, '', 'part', '项目'], [1, '', 'partLock', '照明设备'],
  [1, '-', 'treeFolder', 'A_孔对象分类'], [2, '+', 'part', 'A_窗'], [2, '+', 'part', 'A_门'], [2, '+', 'partLock', 'AS_孔洞'],
  [1, '-', 'treeFolder', 'A_幕墙'], [2, '', 'part', '幕墙 框架'], [2, '', 'part', '幕墙 面板'], [2, '', 'part', '幕墙系统'],
  [1, '-', 'treeFolder', 'A_墙体对象分类'], [2, '', 'part', 'A_墙层'], [2, '+', 'part', 'AS_墙'],
];

function TreeRow({ row }) {
  const [level, mark, icon, text] = row;
  return (
    <li className={`relative flex min-h-0 flex-1 items-center ${level === 2 ? 'ml-[10px] border-l border-[#c4c4c4]' : ''}`}>
      {mark && (
        <svg viewBox="0 0 7 7" className="absolute -left-[4px] size-[6px]" fill="#fff" stroke="#999" strokeWidth="0.900">
          <path d="M0.500 0.500h6v6h-6z" /><path d={mark === '+' ? 'M2 3.500h3M3.500 2v3' : 'M2 3.500h3'} />
        </svg>
      )}
      <span className="ml-[2px] h-px w-[3px] bg-[#c4c4c4]" />
      <Ico n={icon} c="size-[9px]" />
      <span className={`ml-[2px] whitespace-nowrap px-px leading-[10px] ${text === 'A_门' ? 'bg-[#ececec]' : ''}`}>{text}</span>
    </li>
  );
}

const DOORS = [
  ['单扇门-普通', 'APP', '76787', 'PAZ', 'DoorSingleFl...', '900.0mm', '2000.0mm'],
  ['单扇门-普通', 'APP', '77059', 'PAZ', 'DoorSingleFl...', '900.0mm', '2000.0mm'],
  ['单扇门-普通', 'APP', '77331', 'PAZ', 'DoorSingleFl...', '700.0mm', '2000.0mm'],
  ['推拉四扇门', 'APP', '77603', 'BXF', 'CN_D_TLSI1', '2400.0mm', '2000.0mm'],
  ['单扇门-普通', 'APP', '78717', 'PAZ', 'DoorSingleFl...', '700.0mm', '1800.0mm'],
  ['平开双扇门-玻...', 'APP', '79262', 'BXF', 'CN_D_PKS3', '1800.0mm', '2400.0mm'],
];
const COLS = ['实例名称', '实例所有者', '元素 ID', '类型', '文件名称', '宽度', '高度'];

const REPORT_TOOLS = [
  { icon: 'report', text: '新建数据报表', w: 'w-[70px]' },
  { icon: 'reportGrey', text: '修改', w: 'w-[40px]' },
  { icon: 'refreshGreen', text: '刷新', w: 'w-[41px]' },
  { icon: 'funnel', text: '过滤器', w: 'w-[64px]', caret: true },
  { icon: 'ruler', text: '工作单位', w: 'w-[66px]', caret: true },
  { icon: 'zoomsel', text: '缩放和选择', w: 'w-[70px]', caret: true },
  { icon: 'gridGrey', text: '放置表', w: 'w-[57px]', caret: true },
  { icon: 'export', text: '导出', w: 'w-[51px]', caret: true },
  { icon: 'wrench', text: 'Excel 交换', w: 'w-[71px]', caret: true, mono: true },
];

function Chevron({ d }) {
  return <svg viewBox="0 0 6 6" className="size-[5px] shrink-0" fill="none" stroke="#333" strokeWidth="1.200"><path d={d} /></svg>;
}

function ReportWindow() {
  const rows = [...DOORS, ...DOORS];
  return (
    <section className="absolute left-[508px] right-0 top-[131px] border-b border-l border-t border-[#8a8a8a] bg-[#f0f0f0] shadow-lg">
      <div className="flex h-[17px] items-center bg-white pl-[4px] text-[#999]">
        <Ico n="logo" c="size-[9px]" /><h2 className="ml-[4px]">数据报表</h2>
      </div>
      <div className="flex h-[19px] overflow-hidden border-b-2 border-t border-b-[#8f8f8f] border-t-[#bdbdbd] bg-white text-black">
        {REPORT_TOOLS.map(t => (
          <button key={t.text} className={`flex shrink-0 items-center whitespace-nowrap border-r border-[#e4e4e4] pl-[4px] ${t.w}`}>
            <Ico n={t.icon} c="size-[12px]" />
            <span className={t.mono ? "ml-[6px] font-['Liberation_Mono','Noto_Sans_CJK_SC',monospace] text-[6px]" : 'ml-[6px]'}>{t.text}</span>
            {t.caret && <span className="ml-auto mr-[5px] flex"><Caret /></span>}
          </button>
        ))}
      </div>
      <div className="flex">
        <div className="flex w-[194px] shrink-0 flex-col border-r-2 border-[#8f8f8f] pr-[2px] pt-px">
          <span className="relative flex h-[13px] items-center">
            <select aria-label="显示" className="size-full appearance-none border border-[#b0b0b0] bg-[#e3e3e3] px-[2px] text-[7px] leading-[11px] outline-none"><option>全部显示</option></select>
            <span className="pointer-events-none absolute right-[3px]"><Chevron d="M0 2l3 3 3-3" /></span>
          </span>
          <div className="flex h-[317px] bg-white text-[#222]">
            <div className="ml-[17px] flex flex-1 border-l border-[#c4c4c4] pl-[10px]">
              <ul className="flex flex-1 flex-col border-l border-[#c4c4c4]">
                {TREE.map(r => <TreeRow key={r[3]} row={r} />)}
              </ul>
            </div>
            <div className="flex w-[10px] flex-col items-center bg-[#f3f3f3] py-[3px]">
              <Chevron d="M0 4l3-3 3 3" />
              <span className="mt-[11px] h-[14px] w-[8px] bg-[#cdcdcd]" />
              <span className="mt-auto"><Chevron d="M0 2l3 3 3-3" /></span>
            </div>
          </div>
        </div>
        <div className="flex min-w-0 flex-1 flex-col bg-white">
          <div className="flex-1 overflow-hidden">
            <table className="h-[157px] w-[396px] table-fixed border-collapse text-left">
              <thead className="bg-[#f6f6f6] text-[#222]">
                <tr className="h-[14px]">
                  {COLS.map(c => <th key={c} scope="col" className="whitespace-nowrap border-r border-[#c8c8c8] px-[3px] py-0 font-normal leading-[10px]">{c}</th>)}
                </tr>
              </thead>
              <tbody className="bg-[#0078d7] text-white">
                {rows.map((r, i) => (
                  <tr key={i}>
                    {r.map((v, j) => <td key={j} className="whitespace-nowrap px-[3px] py-0 leading-[10px]">{v}</td>)}
                  </tr>
                ))}
              </tbody>
            </table>
          </div>
          <div className="flex h-[10px] items-center bg-[#f0f0f0] pl-[2px]">
            <Chevron d="M4 0L1 3l3 3" /><span className="ml-[2px] h-[8px] w-[57px] bg-[#cdcdcd]" />
          </div>
        </div>
      </div>
      <p className="h-[12px] leading-[13px] text-[#222]">12 个项; 已选择 12 个</p>
    </section>
  );
}

function ImeBar() {
  return (
    <div className="absolute right-0 top-[510px] flex h-[16px] w-[111px] items-center gap-[2px] overflow-hidden whitespace-nowrap">
      <Ico n="sogou" c="size-[15px]" />
      <div className="flex h-[12px] flex-1 items-center justify-between bg-white pl-px">
        <span className="text-[9px] font-bold leading-[10px] text-[#2672c0]">中</span>
        <svg viewBox="0 0 16 16" className="size-[8px]"><circle cx="5" cy="5" r="2" fill="none" stroke="#2672c0" strokeWidth="1.800" /><path d="M11 8h3v3l-2 3" fill="none" stroke="#2672c0" strokeWidth="2.400" /></svg>
        {['smile', 'mic', 'keyboard', 'figure', 'shirt', 'apps'].map(n => <Ico key={n} n={n} c="size-[9px]" />)}
      </div>
    </div>
  );
}

function Coord({ axis, value }) {
  return (
    <span className="flex items-center">
      <label htmlFor={axis} className="w-[14px] pl-[4px] text-[9px] font-bold leading-[12px] text-black">{axis}</label>
      <input id={axis} defaultValue={value} className="h-[12px] w-[67px] border border-[#b8b8b8] bg-white px-[3px] text-[#888] outline-none" />
    </span>
  );
}

function BottomBar() {
  const [open, setOpen] = useState([1, 2, 3]);
  const toggle = (v: number) => setOpen(open.includes(v) ? open.filter(o => o !== v) : [...open, v]);
  return (
    <div className="flex h-[20px] shrink-0 bg-[#d4d4d4]">
      <div className="flex items-center bg-[#f0f0f0]">
        <div className="flex w-[74px] items-center gap-[3px] pl-[2px]">
          {['back', 'fwd', 'teapot'].map(n => <span key={n} className="flex items-center gap-[3px]"><Ico n={n} c="size-[13px]" /><Caret c="text-[#777]" /></span>)}
        </div>
        <span className="relative flex h-[13px] w-[94px] items-center">
          <select aria-label="模型" className="size-full appearance-none border border-[#bcbcbc] bg-[#e3e3e3] pl-[12px] text-[7px] leading-[11px] outline-none"><option>Design Model</option></select>
          <span className="pointer-events-none absolute left-px"><Ico n="windows" /></span>
          <span className="pointer-events-none absolute right-[3px]"><Caret /></span>
        </span>
        <span className="mx-[3px] pl-[2px]"><Ico n="windows" c="size-[13px]" /></span>
        <Sep />
        <div className="ml-[2px] flex h-[14px] w-[80px]">
          {[1, 2, 3, 4, 5, 6, 7, 8].map(v => (
            <button key={v} onClick={() => toggle(v)} className={`flex-1 border-r border-[#666] text-[7px] leading-[13px] ${open.includes(v) ? 'border-y border-y-[#3a78b0] bg-[#6aabe0]' : 'bg-[#f4f4f4]'}`}>{v}</button>
          ))}
        </div>
        <span className="mx-[4px]"><Grip /></span>
        <Ico n="levels" c="size-[13px]" />
        <span className="w-[2px]" /><Sep /><span className="w-[2px]" />
        <span className="relative flex h-[13px] w-[285px] items-center">
          <select aria-label="ACS" className="size-full appearance-none border border-[#bcbcbc] bg-[#e3e3e3] pl-[14px] text-[7px] leading-[11px] outline-none"><option>无</option></select>
          <span className="pointer-events-none absolute left-[2px]"><Ico n="acs" c="size-[8px]" /></span>
          <span className="pointer-events-none absolute right-[3px]"><Caret /></span>
        </span>
        <input aria-label="角度" defaultValue="0.00°" className="ml-px h-[12px] w-[46px] border border-[#c0c0c0] bg-[#f4f4f4] px-[2px] text-[#888] outline-none" />
        <span className="mr-[2px] flex h-[12px] w-[10px] items-center justify-center bg-[#cfcfcf]"><Caret c="text-[#aaa]" /></span>
        <Ico n="calendar" c="size-[12px]" />
        <span className="ml-[4px] mr-[2px]"><Ico n="rotateg" c="size-[12px]" /></span>
        <Caret c="text-[#888]" />
        <span className="w-[2px]" /><Sep /><span className="w-[3px]" />
        <Ico n="snapgrid" c="size-[13px]" />
        <span className="w-[2px]" /><Sep /><span className="w-[2px]" />
        <Ico n="snapcheck" c="size-[13px]" /><span className="mx-[3px]"><Caret /></span>
        <Ico n="snapdb" c="size-[13px]" /><span className="mx-[3px]"><Caret /></span>
        <span className="ml-[2px]"><Grip /></span>
        <Coord axis="X" value="23823.8" />
        <span className="w-[2px]" /><Sep />
        <Coord axis="Y" value="-5055.3" />
        <Sep />
        <Coord axis="Z" value="5123.2" />
      </div>
    </div>
  );
}

function StatusBar() {
  return (
    <footer className="flex h-[14px] shrink-0 items-center border-t border-[#e0e0e0] bg-[#f0f0f0] leading-[13px] text-[#222]">
      <span className="w-[182px] whitespace-nowrap">元素选择 &gt; 标识要添加到集中的元素</span>
      <Grip />
      <span className="mx-[4px]"><Ico n="infodown" c="size-[11px]" /></span>
      <Sep c="bg-[#888]" />
      <div className="ml-auto flex h-full w-[370px] items-center">
        <Sep c="bg-[#999]" />
        <span className="ml-[2px]"><Ico n="keysnap" c="size-[14px]" /></span>
        <span className="ml-[8px]"><Ico n="padlock" c="size-[9px]" /></span>
        <span className="ml-[8px] w-[80px] overflow-hidden whitespace-nowrap">A-DOOR-FRAM (Door Frame)</span>
        <Sep c="bg-[#666]" />
        <span className="w-[73px]" /><Sep c="bg-[#888]" />
        <span className="w-[18px]" /><Sep c="bg-[#e0e0e0]" /><span className="w-[18px]" /><Sep c="bg-[#e0e0e0]" />
        <span className="w-[17px]" /><Sep c="bg-[#888]" />
        <span className="ml-[6px]"><Ico n="scroll" c="size-[10px]" /></span>
        <span className="w-[10px]" /><Sep c="bg-[#e0e0e0]" /><span className="w-[18px]" /><Sep c="bg-[#e0e0e0]" />
        <span className="ml-[15px]"><Ico n="chip" c="size-[10px]" /></span>
        <span className="ml-auto mr-[11px]"><Ico n="badge" c="size-[8px]" /></span>
      </div>
    </footer>
  );
}

export default function App() {
  return (
    <div className="relative flex h-screen w-full flex-col overflow-hidden bg-[#f0f0f0] font-['Open_Sans','Noto_Sans_CJK_SC',sans-serif] text-[7px]">
      <QuickBar />
      <TabBar />
      <Ribbon />
      <AttributeBar />
      <Workspace />
      <BottomBar />
      <StatusBar />
      <aside className="absolute left-[549px] top-[117px] flex h-[20px] w-[90px] items-start border border-[#b8b8b8] bg-white pl-[4px] pt-[3px] text-[#999]">
        <Ico n="logo" c="size-[9px]" /><span className="ml-[3px]">属性面板</span>
      </aside>
      <SelectionWindow />
      <ReportWindow />
      <ImeBar />
      <div className="absolute right-0 top-[467px] h-[30px] w-[2px] rounded-l bg-linear-to-b from-[#555] from-60% to-[#3f9a63] to-70%" />
    </div>
  );
}
